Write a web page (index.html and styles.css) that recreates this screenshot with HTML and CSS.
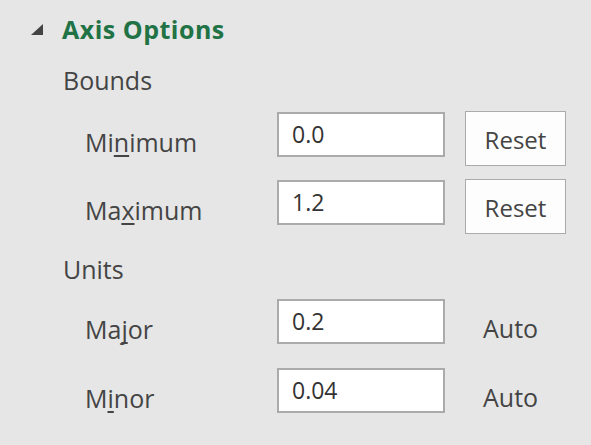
FILE: index.html
```html
<!DOCTYPE html>
<html lang="en">
<head>
<meta charset="utf-8">
<title>Format Axis</title>
<link rel="stylesheet" href="styles.css">
</head>
<body>
<div class="pane">
  <div class="header">
    <svg class="caret" width="12" height="11" viewBox="0 0 12 11"><polygon points="0,11 12,11 12,0" fill="#444444"/></svg>
    <span class="title">Axis Options</span>
  </div>
  <div class="group">Bounds</div>
  <div class="row first">
    <span class="label">Mi<u>n</u>imum</span>
    <div class="field">0.0</div>
    <button class="btn">Reset</button>
  </div>
  <div class="row second">
    <span class="label">Ma<u>x</u>imum</span>
    <div class="field">1.2</div>
    <button class="btn">Reset</button>
  </div>
  <div class="group units">Units</div>
  <div class="row third">
    <span class="label">Ma<u>j</u>or</span>
    <div class="field">0.2</div>
    <span class="auto">Auto</span>
  </div>
  <div class="row fourth">
    <span class="label">M<u>i</u>nor</span>
    <div class="field">0.04</div>
    <span class="auto">Auto</span>
  </div>
</div>
</body>
</html>
```

FILE: styles.css
```css
html, body {
  margin: 0;
  padding: 0;
}
body {
  width: 591px;
  height: 445px;
  overflow: hidden;
  background: #e6e6e6;
  font-family: "Open Sans", "Noto Sans", sans-serif;
  font-size: 25px;
  color: #444444;
}
.pane {
  padding-top: 14px;
}
.header {
  display: flex;
  align-items: center;
  height: 30px;
  padding-left: 31px;
}
.caret {
  display: block;
  margin-right: 19px;
}
.title {
  font-weight: 700;
  color: #217346;
  line-height: 30px;
  font-size: 25px;
  letter-spacing: 0.5px;
}
.group {
  line-height: 30px;
  padding-left: 63px;
  margin-top: 21px;
}
.group.units {
  margin-top: 20px;
}
.row {
  display: flex;
  align-items: flex-start;
  padding-left: 85px;
}
.row.first { margin-top: 17px; }
.row.second { margin-top: 14px; }
.row.third { margin-top: 15px; }
.row.fourth { margin-top: 24px; }
.label {
  width: 192px;
  line-height: 30px;
  margin-top: 15px;
}
.label u {
  text-decoration-thickness: 1.5px;
  text-underline-offset: 3px;
  text-decoration-skip-ink: none;
}
.field {
  box-sizing: border-box;
  width: 168px;
  height: 45px;
  border: 2px solid #ababab;
  background: #ffffff;
  padding-left: 13px;
  line-height: 40px;
  font-size: 23px;
  color: #333333;
}
.btn {
  box-sizing: border-box;
  width: 101px;
  height: 55px;
  margin-top: -1px;
  margin-left: 20px;
  border: 1px solid #ababab;
  background: #fdfdfd;
  font-family: inherit;
  font-size: 24px;
  color: #444444;
  padding: 2px 0 0 0;
  line-height: 51px;
}
.auto {
  margin-left: 38px;
  line-height: 30px;
  margin-top: 14px;
}
```
